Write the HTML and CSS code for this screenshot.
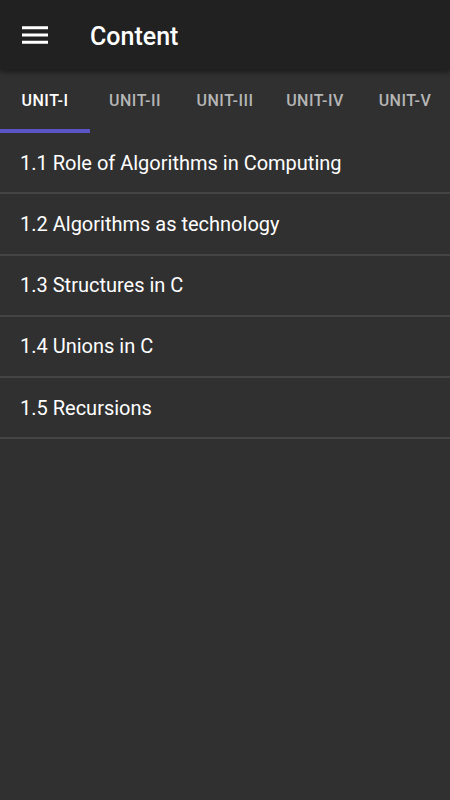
FILE: index.html
```html
<!DOCTYPE html>
<html>
<head>
<meta charset="utf-8">
<link rel="stylesheet" href="styles.css">
</head>
<body>
<div class="app">
  <header class="appbar">
    <svg class="menu" viewBox="3 3 18 18" width="26" height="26" aria-hidden="true">
      <path d="M3 18h18v-2H3v2zm0-5h18v-2H3v2zm0-7v2h18V6H3z" fill="#fff"/>
    </svg>
    <h1 class="title">Content</h1>
  </header>
  <nav class="tabs">
    <div class="tab active">UNIT-I</div>
    <div class="tab">UNIT-II</div>
    <div class="tab">UNIT-III</div>
    <div class="tab">UNIT-IV</div>
    <div class="tab">UNIT-V</div>
  </nav>
  <ul class="list">
    <li class="item">1.1 Role of Algorithms in Computing</li>
    <li class="item">1.2 Algorithms as technology</li>
    <li class="item">1.3 Structures in C</li>
    <li class="item">1.4 Unions in C</li>
    <li class="item">1.5 Recursions</li>
  </ul>
</div>
</body>
</html>
```
FILE: styles.css
```css
html, body {
  margin: 0;
  padding: 0;
  background: #303030;
  font-family: Roboto, "Liberation Sans", sans-serif;
}
.app {
  width: 450px;
  min-height: 800px;
  background: #303030;
}
.appbar {
  height: 70px;
  background: #212121;
  display: flex;
  align-items: center;
  box-shadow: 0 2px 5px rgba(0,0,0,0.45);
  position: relative;
  z-index: 1;
}
.menu {
  margin-left: 22px;
  margin-top: 0;
  display: block;
}
.title {
  margin: 3px 0 0 42px;
  color: #fff;
  font-size: 25px;
  font-weight: 500;
}
.tabs {
  display: flex;
  height: 63px;
  background: #303030;
}
.tab {
  flex: 1;
  display: flex;
  align-items: center;
  justify-content: center;
  color: #b5b5b5;
  font-size: 16px;
  font-weight: 500;
  letter-spacing: 0.5px;
  box-sizing: border-box;
  padding-top: 2px;
  border-bottom: 4px solid transparent;
}
.tab.active {
  color: #fff;
  border-bottom-color: #5a54c6;
}
.list {
  list-style: none;
  margin: 0;
  padding: 0;
}
.item {
  height: 61.25px;
  box-sizing: border-box;
  border-bottom: 2px solid #444;
  display: flex;
  align-items: center;
  padding-left: 20px;
  color: #fff;
  font-size: 20px;
}
```
